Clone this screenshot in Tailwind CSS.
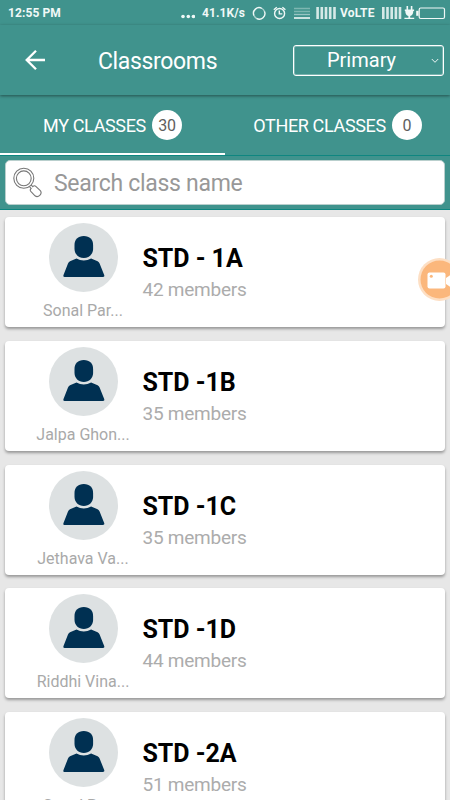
<!DOCTYPE html>
<html lang="en">
<head>
    <meta charset="UTF-8" />
    <meta name="viewport" content="width=device-width, initial-scale=1.0" />
    <title>Classrooms</title>
    <script src="https://cdn.jsdelivr.net/npm/@tailwindcss/browser@4"></script>
    <style>
        body { font-family: Roboto, 'Liberation Sans', sans-serif; }
    </style>
</head>
<body class="relative h-[800px] overflow-hidden bg-[#e7e7e7]">

    <!-- Status bar -->
    <div class="flex h-[25px] items-center bg-[#40938d] pl-2 text-xs font-bold text-[#f0f8f7]">
        <span class="w-[173px] tracking-[0.1px] whitespace-nowrap">12:55 PM</span>
        <svg class="mr-[7px] w-[14px] shrink-0" height="24" viewBox="0 0 14 24" fill="currentColor">
            <circle cx="2" cy="15.5" r="1.8"/><circle cx="7.3" cy="15.5" r="1.8"/><circle cx="12.4" cy="15.5" r="1.8"/>
        </svg>
        <span class="w-[50px] tracking-[0.1px] whitespace-nowrap">41.1K/s</span>
        <svg class="shrink-0" width="63" height="24" viewBox="252 0 63 24" fill="none" stroke="currentColor" stroke-width="1.4">
            <path d="M254 14.6a5.6 5.6 0 0 1 8-7.1M264.4 10.2a5.6 5.6 0 0 1-8 7.1"/>
            <path d="M262 7.5a5.6 5.6 0 0 1 2.4 2.7M254 14.6a5.6 5.6 0 0 0 2.4 2.7" stroke-opacity=".6"/>
            <circle cx="279.6" cy="12.5" r="5"/>
            <path d="M279.3 9.5v3.4h3M273.8 8.8l3-2.5M285.4 8.8l-3-2.5"/>
            <path d="M294 7.5h16M294 10.5h16" stroke-opacity=".35"/>
            <path d="M294 13.5h16" stroke-opacity=".5"/>
            <path d="M294 17h16" stroke-width="1.6"/>
        </svg>
        <svg class="shrink-0" width="25" height="24" viewBox="315 0 25 24" stroke="currentColor" stroke-width="2.6">
            <path d="M317.6 6v12M321.8 6v12M326 6v12M330.2 6v12M334.5 6v12" stroke-opacity=".85"/>
        </svg>
        <span class="w-[40px] tracking-[0.2px] whitespace-nowrap">VoLTE</span>
        <svg class="shrink-0" width="70" height="24" viewBox="380 0 70 24" fill="none" stroke="currentColor">
            <path d="M383.3 6v12M387.5 6v12M391.7 6v12M395.9 6v12M400 6v12" stroke-width="2.6" stroke-opacity=".85"/>
            <path d="M407.3 5v4M411.6 5v4" stroke-width="1.6"/>
            <path d="M404.8 8.5h9.3v1.6h-.8c0 3-1.4 4.6-3.1 4.9v1.8h4v1.2h-9.8v-1.2h4V15c-1.8-.3-3.1-1.9-3.1-4.9h-.5z" fill="currentColor" stroke="none"/>
            <rect x="419.2" y="7" width="25.3" height="10.5" rx="1.5" stroke-width="1.2"/>
            <path d="M417.4 9.8v5" stroke-width="2.4"/>
        </svg>
    </div>

    <!-- App bar -->
    <header class="relative z-10 flex h-[70px] items-center bg-[#40938d] pr-1.5 pl-6 text-white shadow-[0_1px_3px_rgba(0,0,0,0.45)]">
        <svg class="mr-[52px] shrink-0" width="22" height="22" viewBox="0 0 22 22" fill="none" stroke="currentColor" stroke-width="2.3">
            <path d="M12 1.7 2.7 11l9.3 9.3M2.7 11H21"/>
        </svg>
        <h1 class="grow pt-[3px] text-[23px] leading-[28px] tracking-[-0.35px]">Classrooms</h1>
        <button class="relative flex h-[31px] w-[151px] items-center justify-center rounded-[3px] border border-white pr-[14px] text-[20px] ring-1 ring-white/30 ring-inset">
            <span>Primary</span>
            <svg class="absolute top-[12px] right-[4px]" width="8" height="6" viewBox="0 0 8 6" fill="none" stroke="currentColor" stroke-width=".9"><path d="m.8 1 3.2 3.3L7.2 1"/></svg>
        </button>
    </header>

    <!-- Tabs -->
    <nav class="grid h-[60px] grid-cols-2 bg-[#40938d] text-[18px] tracking-[-0.35px] text-white">
        <div class="flex h-[59.500px] items-center justify-center gap-1.5 border-b-[2px] border-white pt-[3px]">
            <span>MY CLASSES</span>
            <span class="flex size-[30px] items-center justify-center rounded-full bg-white pt-px text-[16px] text-[#5e5e5e]">30</span>
        </div>
        <div class="flex items-center justify-center gap-1.5">
            <span>OTHER CLASSES</span>
            <span class="flex size-[30px] items-center justify-center rounded-full bg-white pt-px text-[16px] text-[#5e5e5e]">0</span>
        </div>
    </nav>

    <!-- Search -->
    <div class="h-[55px] border-y border-[#0e8680] bg-[#40938d] px-[5px] pt-[4px]">
        <div class="flex h-[45px] items-center rounded-[5px] border border-[#b9cfcd] bg-white pl-[6px] text-[#989898]">
            <svg class="mr-[11px] shrink-0" width="31" height="31" viewBox="0 0 31 31" fill="none" stroke="#777" stroke-width="1.1">
                <circle cx="11.8" cy="11.3" r="10"/>
                <circle cx="11.8" cy="11.3" r="7.4"/>
                <path d="m17.6 19.8 1.6 1.6c-1.2 1.1-1.3 2-.4 3l4.2 4.4c3.2 2.4 7.800-2 5.300-5.200l-4.500-4.300c-1-.9-1.900-.8-3 .3l-1.700-1.700"/>
            </svg>
            <span class="pt-[3px] text-[23px] tracking-[-0.3px]">Search class name</span>
        </div>
    </div>

    <!-- Class list -->
    <main id="class-list" class="flex flex-col gap-[13.8px] px-[5px] pt-[7px]"></main>

    <!-- Floating screen recorder button -->
    <div class="absolute top-[258px] left-[417.5px] h-[43px] w-[32.5px] overflow-hidden">
        <svg width="43" height="43" viewBox="0 0 43 43">
            <circle cx="21.5" cy="21.5" r="21.5" fill="#fddfc4"/>
            <circle cx="21.5" cy="21.5" r="19" fill="#fbb77c"/>
            <rect x="9.5" y="14.5" width="18" height="16" rx="2" fill="#fff"/>
            <path d="m28 20 6-4v14l-6-4z" fill="#fff"/>
            <circle cx="13.3" cy="18.2" r="1.5" fill="#fbb77c"/>
        </svg>
    </div>

<script>
    const classes = [
        { name: "STD - 1A", members: 42, teacher: "Sonal Par..." },
        { name: "STD -1B", members: 35, teacher: "Jalpa Ghon..." },
        { name: "STD -1C", members: 35, teacher: "Jethava Va..." },
        { name: "STD -1D", members: 44, teacher: "Riddhi Vina..." },
        { name: "STD -2A", members: 51, teacher: "Sonal Par..." }
    ];

    document.getElementById("class-list").innerHTML = classes.map(c => `
        <article class="flex h-[110px] shrink-0 rounded-[4px] bg-white shadow-[0_2px_3px_rgba(0,0,0,0.35)]">
            <div class="flex w-[137.5px] flex-col items-center pt-1.5 pl-[18.5px]">
                <svg class="shrink-0" width="69" height="69" viewBox="0 0 69 69">
                    <circle cx="34.5" cy="34.5" r="34.5" fill="#dde1e2"/>
                    <path d="M34.8 13c6 0 9.3 3.6 9.3 9v4c0 5-4 9-9.3 9s-9.3-4-9.3-9v-4c0-5.4 3.3-9 9.3-9z" fill="#003052"/>
                    <path d="M27.5 35.6c4.5 2.6 10 2.6 14.6 0l6.5 2.7c1 .5 1.6 1.2 2 2.2l4.6 11.500c.4 1.200 0 2-1.200 2H15.600c-1.200 0-1.500-.8-1.100-2L19 40.500c.4-1 1-1.700 2-2.200z" fill="#003052"/>
                </svg>
                <p class="mt-[9px] text-[16px] leading-5 whitespace-nowrap text-[#a9a9a9]">${c.teacher}</p>
            </div>
            <div class="pt-[27px]">
                <h2 class="text-[25px] leading-[30px] font-bold tracking-[-0.05px] whitespace-nowrap text-black">${c.name}</h2>
                <p class="mt-[4px] text-[19px] leading-6 tracking-[-0.25px] whitespace-nowrap text-[#acacac]">${c.members} members</p>
            </div>
        </article>
    `).join("");
</script>
</body>
</html>
